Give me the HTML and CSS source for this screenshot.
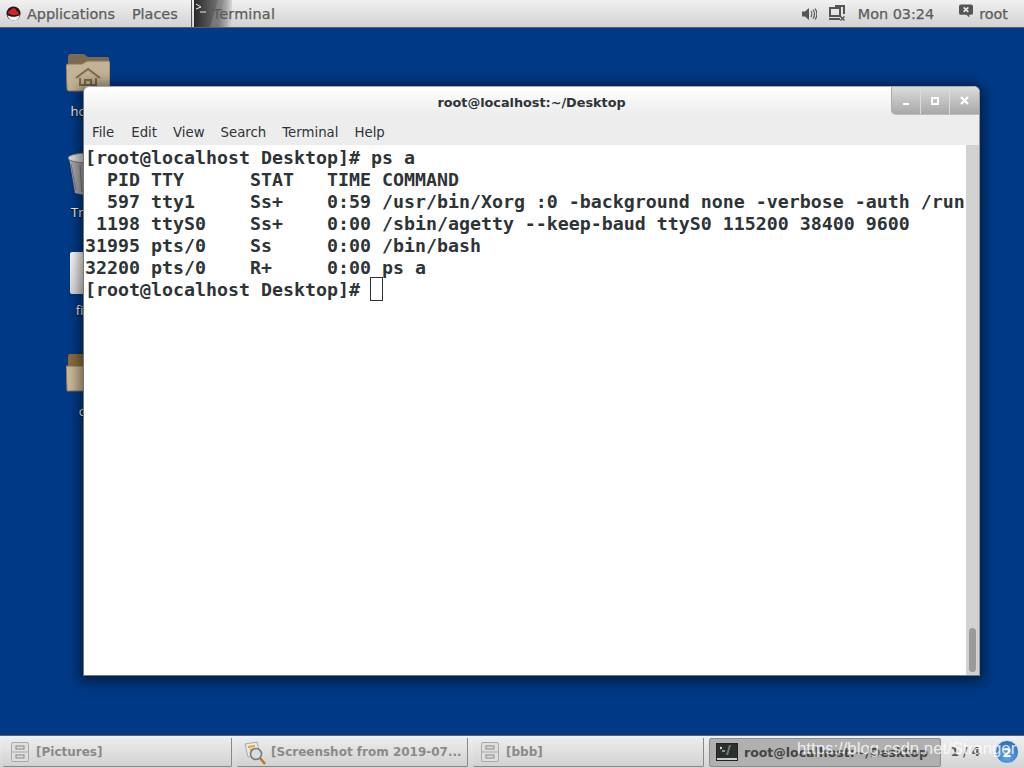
FILE: index.html
```html
<!DOCTYPE html>
<html lang="en">
<head>
<meta charset="utf-8">
<title>Desktop</title>
<link rel="stylesheet" href="styles.css">
</head>
<body>
<div class="screen">
  <header class="topbar">
    <div class="top-left">
      <svg class="hat" viewBox="0 0 16 16"><circle cx="8" cy="8" r="7.500" fill="#1a1a1a"/><path d="M1.500 9.500C4 12 12 12 14.600 9.500C14 13.500 11 15.500 8 15.500S2.500 13.500 1.500 9.500Z" fill="#f2f2f2"/><path d="M2 7.500C2.500 5 5 4.500 6 3C8 2 10.500 2.500 11 4.500C12 6 14 7 14 8.500C11 10.500 5 10 2 7.500Z" fill="#d8202a"/></svg>
      <span class="top-item">Applications</span>
      <span class="top-item places">Places</span>
      <span class="top-sep"></span>
      <span class="launcher">
        <span class="launcher-thumb">
          <svg viewBox="0 0 38 27"><path d="M2 4L7 7L2 9" fill="none" stroke="#eee"/><path d="M6 12H12" stroke="#eee"/><path d="M24 0L16 27H22L30 0Z" fill="#888" opacity=".55"/></svg>
        </span>
        <span class="launcher-label">Terminal</span>
      </span>
    </div>
    <div class="top-right">
      <svg class="ic-vol" viewBox="0 0 16 16"><path d="M1 5.500H4L8 2V14L4 10.500H1Z" fill="#555"/><path d="M10 5C11 6.500 11 9.500 10 11M12 3.500C14 6 14 10 12 12.500M14 2.500C16.500 6 16.500 10 14 13.500" fill="none" stroke="#555" stroke-width="1.200"/></svg>
      <svg class="ic-net" viewBox="0 0 17 17"><rect x="1" y="3" width="10" height="8" fill="none" stroke="#555" stroke-width="2"/><path d="M0 13H11V15H0Z" fill="#555"/><path d="M6 1H15V9" fill="none" stroke="#555" stroke-width="2"/><path d="M11.500 11.500L15.500 15.500M15.500 11.500L11.500 15.500" stroke="#555" stroke-width="1.500"/></svg>
      <span class="top-item clock">Mon 03:24</span>
      <svg class="ic-user" viewBox="0 0 15 15"><path d="M2 0H13Q15 0 15 2V9Q15 11 13 11H11V14L8 11H2Q0 11 0 9V2Q0 0 2 0Z" fill="#555"/><path d="M5 3L10 8M10 3L5 8" stroke="#e6e6e6" stroke-width="1.800"/></svg>
      <span class="top-item user">root</span>
    </div>
  </header>

  <main class="desktop">
    <div class="desk-icon icon-home">
      <svg class="folder" viewBox="0 0 44 40"><path d="M2 4Q2 1 4 1H18L22 4H42Q43 4 43 6V30H2Z" fill="#7a6a50"/><path d="M0 13Q0 11 2 11H16L21 8H43Q44 8 44 10V36Q44 38 42 38H3Q1 38 1 36Z" fill="#c4b396" stroke="#8a7654"/><path d="M10 25L22 16L34 25M14 25V32H30V25M19 32V27H25V32" fill="none" stroke="#7d6a4c" stroke-width="2"/></svg>
      <span class="desk-label">home</span>
    </div>
    <div class="desk-icon icon-trash">
      <svg class="trash" viewBox="0 0 44 44"><path d="M3 6L9 41Q22 45 35 41L41 6Z" fill="#aaa"/><path d="M5 12L10 38M14 13L16 40M22 13V41M30 13L28 40" stroke="#777"/><ellipse cx="22" cy="6" rx="20" ry="5" fill="#ddd" stroke="#777"/></svg>
      <span class="desk-label">Trash</span>
    </div>
    <div class="desk-icon icon-file">
      <span class="file-shape"></span>
      <span class="desk-label">files</span>
    </div>
    <div class="desk-icon icon-dir">
      <svg class="folder" viewBox="0 0 44 40"><path d="M2 4Q2 1 4 1H42V30H2Z" fill="#8d6f3f"/><path d="M0 13H18L24 8H44V38H1Z" fill="#cdbb9a" stroke="#8a7654"/></svg>
      <span class="desk-label">ccc</span>
    </div>

    <section class="window">
      <div class="titlebar">
        <span class="title">root@localhost:~/Desktop</span>
        <div class="win-buttons">
          <span class="win-btn"><i class="g-min"></i></span>
          <span class="win-btn"><i class="g-max"></i></span>
          <span class="win-btn"><svg class="g-close" viewBox="0 0 9 9"><path d="M1 1L8 8M8 1L1 8" stroke="#fff" stroke-width="2.200"/></svg></span>
        </div>
      </div>
      <nav class="menubar">
        <span>File</span><span>Edit</span><span>View</span><span>Search</span><span>Terminal</span><span>Help</span>
      </nav>
      <div class="term-area">
        <pre class="term">[root@localhost Desktop]# ps a
  PID TTY      STAT   TIME COMMAND
  597 tty1     Ss+    0:59 /usr/bin/Xorg :0 -background none -verbose -auth /run
 1198 ttyS0    Ss+    0:00 /sbin/agetty --keep-baud ttyS0 115200 38400 9600
31995 pts/0    Ss     0:00 /bin/bash
32200 pts/0    R+     0:00 ps a
[root@localhost Desktop]# <span class="cursor"> </span></pre>
        <div class="scrollbar"><span class="thumb"></span></div>
      </div>
    </section>
  </main>

  <footer class="taskbar">
    <div class="task">
      <svg class="cab" viewBox="0 0 18 20"><rect x=".5" y=".5" width="17" height="19" rx="1.500" fill="#dedede" stroke="#aaa"/><path d="M1 10H17" stroke="#aaa"/><rect x="5" y="4" width="8" height="3" fill="none" stroke="#888"/><rect x="5" y="13" width="8" height="3" fill="none" stroke="#888"/></svg>
      <span class="task-text">[Pictures]</span>
    </div>
    <div class="task">
      <svg class="viewer" viewBox="0 0 24 24"><path d="M2 3L14 1L17 14L5 16Z" fill="#efe9dc" stroke="#aaa"/><path d="M5 6L12 5M7 9L12 8" stroke="#d9a441" stroke-width="2"/><circle cx="13" cy="13" r="5.500" fill="#d6dfe6" stroke="#777" stroke-width="1.500"/><path d="M17 17L22 23" stroke="#b57a2c" stroke-width="2.500"/></svg>
      <span class="task-text">[Screenshot from 2019-07...</span>
    </div>
    <div class="task">
      <svg class="cab" viewBox="0 0 18 20"><rect x=".5" y=".5" width="17" height="19" rx="1.500" fill="#dedede" stroke="#aaa"/><path d="M1 10H17" stroke="#aaa"/><rect x="5" y="4" width="8" height="3" fill="none" stroke="#888"/><rect x="5" y="13" width="8" height="3" fill="none" stroke="#888"/></svg>
      <span class="task-text">[bbb]</span>
    </div>
    <div class="task active">
      <svg class="term-ic" viewBox="0 0 22 18"><rect x=".5" y=".5" width="21" height="17" fill="#2b2f2f" stroke="#222"/><rect x="1" y="15" width="20" height="2" fill="#ccc"/><path d="M4 4L6 5L4 6M6 8H9" stroke="#fff" fill="none"/><path d="M13 2L10 12H12L15 2Z" fill="#777"/></svg>
      <span class="task-text strong">root@localhost:~/Desktop</span>
    </div>
    <div class="pager">
      <span class="pager-text">1 / 4</span>
      <span class="badge">2</span>
    </div>
    <span class="watermark">https://blog.csdn.net/Stranger</span>
  </footer>
</div>
</body>
</html>
```

FILE: styles.css
```css
* { box-sizing: border-box; }
html, body { margin: 0; padding: 0; }
body { width: 1024px; height: 768px; overflow: hidden; font-family: "Open Sans", "DejaVu Sans", sans-serif; }
.screen { width: 1024px; height: 768px; display: flex; flex-direction: column; background: #003a87; }

.topbar { height: 28px; flex: none; display: flex; justify-content: space-between; align-items: stretch; background: linear-gradient(#f1f1f1, #d2d2d2); border-bottom: 1px solid #5f5f5f; font-family: "DejaVu Sans", sans-serif; font-size: 14.4px; color: #5c5c5c; }
.top-left, .top-right { display: flex; align-items: center; }
.hat { width: 15px; height: 15px; margin-left: 6px; margin-right: 6px; }
.top-item { -webkit-text-stroke: .25px #5c5c5c; white-space: nowrap; }
.places { margin-left: 17px; }
.top-sep { width: 1px; height: 27px; background: #555; margin-left: 13px; }
.launcher { position: relative; margin-left: 2px; display: flex; align-items: center; height: 27px; width: 85px; }
.launcher-thumb { width: 38px; height: 27px; background: linear-gradient(90deg, #2a2a2a 0, #666 55%, #aaa 85%, #d8d8d8 100%); }
.launcher-thumb svg { display: block; width: 38px; height: 27px; }
.launcher-label { position: absolute; left: 19px; top: 6px; letter-spacing: .2px; -webkit-text-stroke: .25px #5c5c5c; }
.top-right { padding-right: 16px; }
.ic-vol { width: 16px; height: 16px; margin-right: 12px; }
.ic-net { width: 17px; height: 17px; margin-right: 12px; }
.clock { margin-right: 25px; }
.ic-user { width: 14px; height: 15px; margin-right: 6px; margin-bottom: 4px; }

.desktop { position: relative; flex: 1; }
.desk-icon { position: absolute; display: flex; flex-direction: column; align-items: center; width: 100px; color: #fff; font-size: 13px; }
.desk-label { white-space: nowrap; text-shadow: 0 1px 1px #000; }
.icon-home { left: 38px; top: 25px; }
.icon-trash { left: 38px; top: 124px; }
.icon-file { left: 38px; top: 224px; }
.icon-dir { left: 38px; top: 325px; }
.folder { width: 44px; height: 40px; margin-bottom: 9px; display: block; }
.trash { width: 44px; height: 44px; margin-bottom: 7px; display: block; }
.file-shape { width: 36px; height: 42px; background: linear-gradient(#fff, #ddd); border-radius: 2px; margin-bottom: 7px; }

.window { position: absolute; left: 83px; top: 58px; width: 897px; height: 590px; display: flex; flex-direction: column; background: #ededed; border-radius: 6px 6px 0 0; box-shadow: 0 2px 14px 4px rgba(0,0,0,.5); border-right: 1px solid #999; border-bottom: 1px solid #777; border-left: 1px solid #777; }
.titlebar { height: 29px; flex: none; position: relative; display: flex; justify-content: center; align-items: center; background: linear-gradient(#fff, #ededed); border-top: 1px solid #aaa; border-radius: 6px 6px 0 0; }
.title { font-family: "DejaVu Sans", sans-serif; font-weight: bold; font-size: 12.8px; color: #2e3436; margin-top: 2px; }
.win-buttons { position: absolute; right: 0; top: 0; height: 28px; display: flex; background: linear-gradient(#dcdcdc, #a8a8a8); border-radius: 0 6px 0 5px; border-left: 1px solid #aaa; border-bottom: 1px solid #bbb; }
.win-btn { width: 29px; display: flex; align-items: center; justify-content: center; border-right: 1px solid #ddd; }
.win-btn:last-child { border-right: 0; }
.g-min { width: 6px; height: 2px; background: #fff; margin-top: 7px; }
.g-max { width: 8px; height: 8px; border: 2px solid #fff; }
.g-close { width: 9px; height: 9px; }
.menubar { height: 30px; flex: none; display: flex; gap: 16px; padding: 4px 0 0 8px; align-items: center; font-family: "DejaVu Sans", sans-serif; font-size: 13.3px; color: #2e3436; background: #ededed; }
.menubar span:first-child { margin-right: 1px; }
.term-area { flex: 1; display: flex; min-height: 0; background: #fff; }
.term { flex: 1; min-width: 0; margin: 0; padding: 2px 0 0 1px; overflow: hidden; font-family: "DejaVu Sans Mono", monospace; font-weight: bold; font-size: 18.28px; line-height: 22px; color: #2e3436; }
.cursor { display: inline-block; width: 13px; height: 24px; margin: -2px 0 0 -1px; vertical-align: top; border: 1px solid #2e3436; }
.scrollbar { width: 13px; flex: none; position: relative; background: #d2d2d2; }
.thumb { position: absolute; left: 3px; bottom: 3px; width: 7px; height: 44px; border-radius: 4px; background: #9a9a9a; }

.taskbar { height: 33px; flex: none; position: relative; display: flex; gap: 5px; padding: 2px 0 0 3px; background: linear-gradient(#f0f0f0, #d4d4d4); border-top: 1px solid #5f5f5f; font-family: "DejaVu Sans", sans-serif; font-size: 12px; font-weight: bold; color: #8a8a8a; }
.task { width: 229px; height: 29px; flex: none; display: flex; align-items: center; gap: 7px; padding: 0 0 1px 8px; border-right: 1px solid #888; border-bottom: 1px solid #888; border-radius: 0 0 2px 2px; background: linear-gradient(#ececec, #d2d2d2); }
.task:nth-child(2), .task:nth-child(3) { width: 231px; }
.task.active { background: #b0b0b0; color: #444; border: 1px solid #8c8c8c; border-radius: 2px; width: 232px; gap: 6px; padding-left: 6px; }
.task-text { white-space: nowrap; overflow: hidden; }
.strong { font-size: 12.5px; }
.cab { width: 18px; height: 20px; }
.viewer { width: 24px; height: 24px; margin-top: 2px; margin-left: -2px; margin-right: -3px; }
.term-ic { width: 22px; height: 18px; }
.pager { flex: 1; display: flex; align-items: center; justify-content: flex-end; margin-left: -5px; padding: 0 5px 2px 0; color: #555; gap: 15px; }
.badge { width: 24px; height: 24px; border-radius: 50%; background: radial-gradient(circle at 50% 70%, #6aa7e6, #1d5fae); color: #fff; display: flex; align-items: center; justify-content: center; font-size: 13px; border: 1px solid #cfe0f2; }
.watermark { position: absolute; left: 797px; top: 3px; font-family: "Liberation Sans", sans-serif; font-weight: normal; font-size: 16.8px; color: rgba(255,255,255,.8); white-space: nowrap; }
```
